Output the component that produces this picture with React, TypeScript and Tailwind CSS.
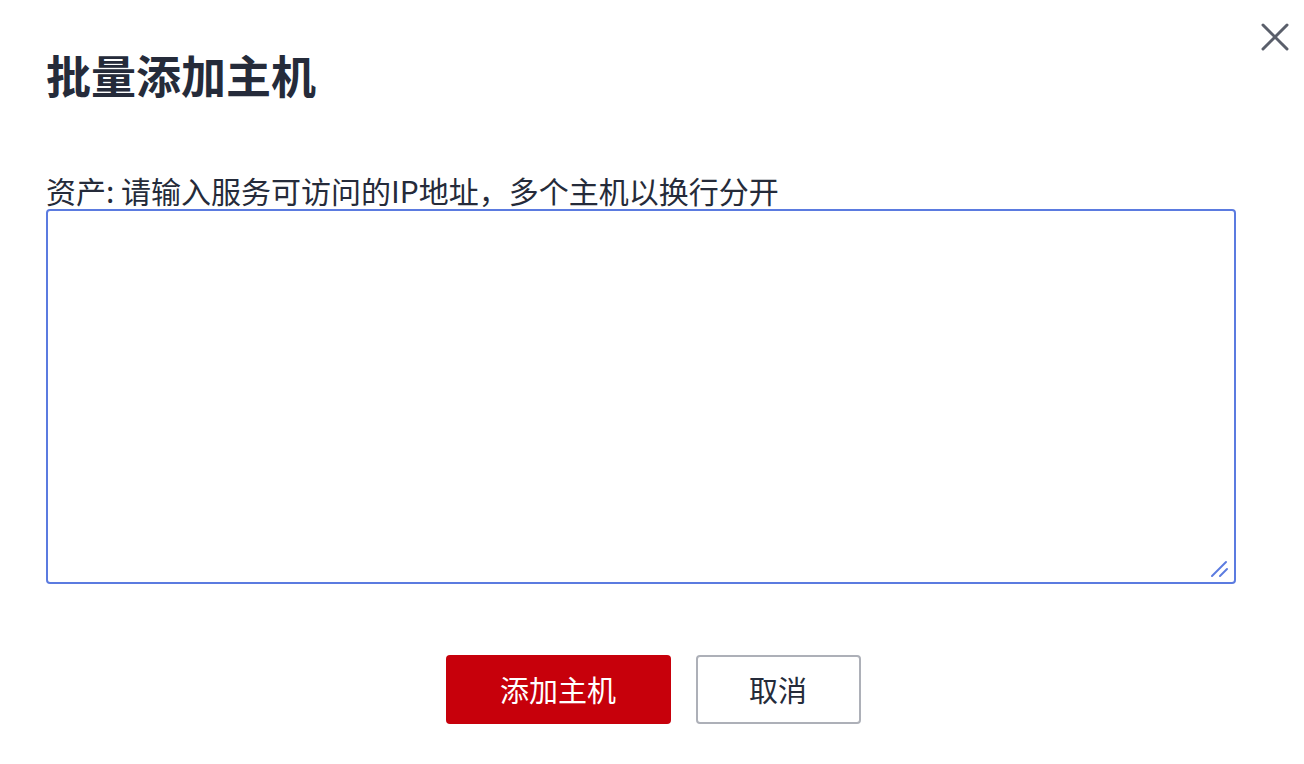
import { X } from 'lucide-react';

export default function App() {
  return (
    <div
      className="relative w-[1304px] h-[764px] bg-white text-[#252b3a]"
      style={{ fontFamily: '"Noto Sans CJK SC", "Noto Sans", sans-serif' }}
    >
      <button className="absolute right-[5px] top-[13px] text-[#5a5f6b]">
        <X size={48} strokeWidth={1.5} />
      </button>
      <div className="pl-[46px] pr-[68px] pt-[46px]">
        <h1 className="text-[45px] font-bold leading-[58px]">批量添加主机</h1>
        <label className="mt-[67px] block text-[30px] leading-[38px] text-[#252b3a]">
          资产: 请输入服务可访问的IP地址，多个主机以换行分开
        </label>
        <div className="relative">
          <textarea className="block w-full h-[375px] border-2 border-[#5b7be0] rounded-[4px] outline-none p-2 text-[24px] resize-none" />
          <svg
            className="absolute right-[6px] bottom-[6px]"
            width="20"
            height="20"
            viewBox="0 0 20 20"
            fill="none"
            stroke="#5b7be0"
            strokeWidth="2"
            strokeLinecap="round"
          >
            <line x1="2" y1="18" x2="16" y2="4" />
            <line x1="10" y1="18" x2="17" y2="11" />
          </svg>
        </div>
      </div>
      <div className="flex justify-center gap-[25px] mt-[71px] pl-[2px]">
        <button className="w-[225px] h-[69px] rounded-[4px] bg-[#c7000b] text-white text-[29px]">
          添加主机
        </button>
        <button className="w-[165px] h-[69px] rounded-[4px] border-2 border-[#adb0b8] bg-white text-[29px] text-[#252b3a]">
          取消
        </button>
      </div>
    </div>
  );
}
